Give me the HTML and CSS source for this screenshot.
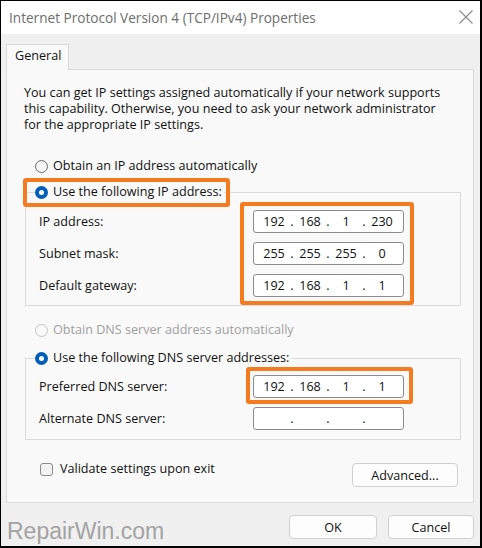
FILE: index.html
```html
<!DOCTYPE html>
<html lang="en">
<head>
<meta charset="UTF-8">
<meta name="viewport" content="width=device-width, initial-scale=1.0">
<title>Internet Protocol Version 4 (TCP/IPv4) Properties</title>
<link rel="stylesheet" href="styles.css">
</head>
<body>
<div class="window">
    <div class="titlebar">
        <span class="title">Internet Protocol Version 4 (TCP/IPv4) Properties</span>
        <svg class="close" width="14" height="14" viewBox="0 0 14 14">
            <path d="M0.5 0.5 L13.5 13.5 M13.5 0.5 L0.5 13.5" stroke="#8a8a8a" stroke-width="1.1" fill="none"/>
        </svg>
    </div>

    <div class="body">
        <div class="tabs"><div class="tab">General</div></div>

        <div class="pane">
            <p class="intro">You can get IP settings assigned automatically if your network supports<br>this capability. Otherwise, you need to ask your network administrator<br>for the appropriate IP settings.</p>

            <div class="option first"><span class="radio"></span>Obtain an IP address automatically</div>

            <fieldset class="group">
                <legend class="option marked"><span class="radio checked"></span>Use the following IP address:</legend>
                <div class="fields">
                    <div class="labels">
                        <span>IP address:</span>
                        <span>Subnet mask:</span>
                        <span>Default gateway:</span>
                    </div>
                    <div class="inputs mark-ip">
                        <div class="ip"><span>192</span><i>.</i><span>168</span><i>.</i><span>1</span><i>.</i><span>230</span></div>
                        <div class="ip"><span>255</span><i>.</i><span>255</span><i>.</i><span>255</span><i>.</i><span>0</span></div>
                        <div class="ip"><span>192</span><i>.</i><span>168</span><i>.</i><span>1</span><i>.</i><span>1</span></div>
                    </div>
                </div>
            </fieldset>

            <div class="option disabled dns-auto"><span class="radio"></span>Obtain DNS server address automatically</div>

            <fieldset class="group dns">
                <legend class="option"><span class="radio checked"></span>Use the following DNS server addresses:</legend>
                <div class="fields">
                    <div class="labels">
                        <span>Preferred DNS server:</span>
                        <span>Alternate DNS server:</span>
                    </div>
                    <div class="inputs">
                        <div class="ip mark-dns"><span>192</span><i>.</i><span>168</span><i>.</i><span>1</span><i>.</i><span>1</span></div>
                        <div class="ip"><span></span><i>.</i><span></span><i>.</i><span></span><i>.</i><span></span></div>
                    </div>
                </div>
            </fieldset>

            <div class="pane-footer">
                <div class="check-row"><span class="checkbox"></span>Validate settings upon exit</div>
                <button class="btn advanced">Advanced...</button>
            </div>
        </div>

        <div class="actions">
            <span class="watermark">RepairWin.com</span>
            <button class="btn ok">OK</button>
            <button class="btn cancel">Cancel</button>
        </div>
    </div>
</div>
</body>
</html>
```

FILE: styles.css
```css
* {
    box-sizing: border-box;
}

body {
    margin: 0;
    font-family: "Open Sans", "Noto Sans", sans-serif;
    font-size: 12.6px;
    color: #111;
}

.window {
    width: 482px;
    height: 548px;
    border: 1px solid #000;
    border-right-width: 2px;
    border-bottom-width: 2px;
    background-color: #f0f0f0;
    display: flex;
    flex-direction: column;
    overflow: hidden;
}

.titlebar {
    height: 33px;
    flex-shrink: 0;
    background-color: #fff;
    display: flex;
    align-items: center;
    justify-content: space-between;
    padding: 0 7px 0 8px;
}

.title {
    color: #6e6e6e;
    font-size: 13.6px;
}

.close {
    display: block;
    margin-top: -1px;
}

.body {
    flex: 1;
    padding: 10px 0 0 5px;
}

.tabs {
    display: flex;
}

.tab {
    width: 63px;
    height: 26px;
    padding: 3px 0 0 8px;
    border: 1px solid #d9d9d9;
    border-bottom: none;
    background-color: #f9f9f9;
    line-height: 16px;
    position: relative;
    z-index: 1;
    margin-bottom: -1px;
}

.pane {
    width: 468px;
    height: 434px;
    border: 1px solid #dadada;
    background-color: #f9f9f9;
    padding: 15px 0 0 0;
}

.intro {
    margin: 0 0 0 17px;
    line-height: 16px;
}

.option {
    display: flex;
    align-items: center;
    line-height: 16px;
}

.option.first {
    margin: 25px 0 0 28px;
}

.option.disabled {
    color: #a0a0a0;
}

.dns-auto {
    margin: 16px 0 0 28px;
}

.radio {
    width: 13px;
    height: 13px;
    border-radius: 50%;
    border: 1px solid #6a6a6a;
    background-color: #f4f4f4;
    margin-right: 5px;
    flex-shrink: 0;
}

.radio.checked {
    border: 4px solid #005fb8;
    background-color: #fff;
}

.option.disabled .radio {
    border-color: #c4c4c4;
    background-color: #f9f9f9;
}

.group {
    margin: 8px 12px 0 18px;
    border: 1px solid #dcdcdc;
    padding: 8px 56px 8px 13px;
    min-width: 0;
}

.group legend {
    padding: 2px 2px 2px 0;
    margin-left: -4px;
}

.group.dns {
    margin-top: 10px;
    padding-top: 7px;
    padding-bottom: 9px;
}

.marked,
.mark-ip,
.mark-dns {
    position: relative;
}

.marked::after,
.mark-ip::after,
.mark-dns::after {
    content: "";
    position: absolute;
    border: 4px solid #f47b20;
    border-radius: 3px;
}

.marked::after {
    top: -4px;
    bottom: -5px;
    left: -12px;
    right: -6px;
}

.mark-ip::after {
    top: -8px;
    bottom: -8px;
    left: -13px;
    right: -10px;
}

.mark-dns::after {
    top: -9px;
    bottom: -7px;
    left: -8px;
    right: -10px;
}

.fields {
    display: flex;
}

.labels {
    flex: 1;
    display: grid;
    grid-auto-rows: 23px;
    row-gap: 9px;
    align-items: center;
}

.inputs {
    width: 151px;
    display: flex;
    flex-direction: column;
    gap: 9px;
}

.ip {
    height: 23px;
    display: flex;
    align-items: center;
    padding-left: 5px;
    background-color: #fff;
    border: 1px solid #8c8c8c;
    border-radius: 3px;
}

.ip span {
    width: 30px;
    text-align: center;
}

.ip i {
    font-style: normal;
    width: 6px;
    text-align: center;
}

.pane-footer {
    display: flex;
    justify-content: space-between;
    align-items: flex-start;
    margin: 20px 15px 0 33px;
}

.check-row {
    display: flex;
    align-items: center;
    line-height: 16px;
    margin-top: 1px;
}

.checkbox {
    width: 13px;
    height: 13px;
    border: 1px solid #8a8a8a;
    border-radius: 3px;
    background-color: #f3f3f3;
    margin-right: 7px;
}

.btn {
    font-family: inherit;
    font-size: 12.6px;
    color: #111;
    background-color: #fdfdfd;
    border: 1px solid #d0d0d0;
    border-radius: 4px;
    height: 24px;
    padding: 0;
}

.advanced {
    width: 106px;
    margin-top: 3px;
}

.actions {
    display: flex;
    align-items: flex-start;
    margin-top: 12px;
}

.watermark {
    font-family: "Liberation Sans", Arial, sans-serif;
    font-size: 23px;
    line-height: 24px;
    color: #a3a3a3;
    margin: 4px 0 0 1px;
}

.ok {
    width: 88px;
    margin-left: auto;
}

.cancel {
    width: 86px;
    margin: 0 6px 0 11px;
}
```
